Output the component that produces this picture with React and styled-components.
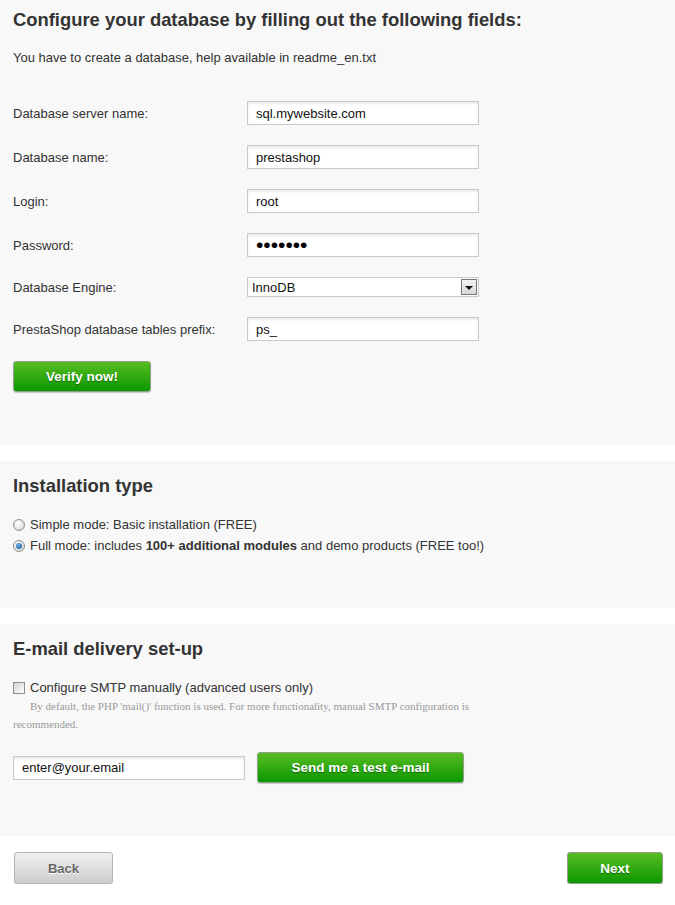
import React from 'react'
import styled, { createGlobalStyle } from 'styled-components'

const GlobalStyle = createGlobalStyle`
   html, body {
      margin: 0;
      padding: 0;
      background: #fff;
   }
   body {
      font-family: "Liberation Sans", Arial, sans-serif;
      font-size: 13px;
      color: #333;
   }
`

const Page = styled.div`
   width: 675px;
   display: flex;
   flex-direction: column;
   gap: 16px;
`

const Section = styled.section`
   background: #f8f8f8;
   padding: ${(p) => p.$top || 15}px 13px ${(p) => p.$bottom || 52}px 13px;
`

const Title = styled.h2`
   margin: 0;
   font-size: 18.4px;
   line-height: 20px;
   font-weight: bold;
   color: #333;
`

const Intro = styled.p`
   margin: 20px 0 36px;
   line-height: 15px;
`

const Fields = styled.div`
   display: flex;
   flex-direction: column;
   gap: 20px;
`

const Row = styled.div`
   display: flex;
   align-items: center;
`

const Label = styled.label`
   width: 234px;
   flex-shrink: 0;
   color: #333;
`

const TextInput = styled.input`
   box-sizing: border-box;
   width: ${(p) => p.$width || 232}px;
   height: 24px;
   margin: 0;
   padding: 0 8px;
   border: 1px solid #c9c9c9;
   background: #fff;
   box-shadow: inset 0 2px 2px rgba(0, 0, 0, 0.08);
   font-family: "Liberation Sans", Arial, sans-serif;
   font-size: 13px;
   color: #111;
   outline: none;
   &[type='password'] {
      font-size: 21px;
      color: #000;
   }
`

const SelectBox = styled.div`
   box-sizing: border-box;
   width: 232px;
   height: 20px;
   border: 1px solid #c9c9c9;
   background: #fff;
   display: flex;
   align-items: center;
   justify-content: space-between;
   padding: 0 1px 0 4px;
   font-size: 13px;
   color: #111;
`

const SelectArrow = styled.span`
   box-sizing: border-box;
   width: 16px;
   height: 16px;
   border: 1px solid #777;
   background: linear-gradient(#f4f4f4, #d8d8d8);
   display: flex;
   align-items: center;
   justify-content: center;
   &::after {
      content: '';
      border-left: 4px solid transparent;
      border-right: 4px solid transparent;
      border-top: 4px solid #111;
      margin-top: 1px;
   }
`

const GreenButton = styled.button`
   box-sizing: border-box;
   width: ${(p) => p.$width}px;
   height: ${(p) => p.$height || 31}px;
   margin: 0;
   padding: 0;
   border: 1px solid #8fa08a;
   border-radius: 3px;
   background: linear-gradient(#58bd22, #0c9700);
   box-shadow: 0 1px 1px rgba(0, 0, 0, 0.2);
   color: #fff;
   font-family: "Liberation Sans", Arial, sans-serif;
   font-size: 13.5px;
   font-weight: bold;
   text-shadow: 0 1px 1px rgba(0, 60, 0, 0.6);
   cursor: pointer;
`

const VerifyWrap = styled.div`
   margin-top: 20px;
`

const Options = styled.div`
   margin-top: 18px;
   display: flex;
   flex-direction: column;
`

const OptionRow = styled.label`
   display: flex;
   align-items: center;
   gap: 5px;
   line-height: 21px;
`

const Radio = styled.span`
   box-sizing: border-box;
   flex-shrink: 0;
   width: 12px;
   height: 12px;
   border-radius: 50%;
   border: 1px solid #8e8e8e;
   background: radial-gradient(circle at 40% 35%, #ffffff, #cfcfcf);
   display: flex;
   align-items: center;
   justify-content: center;
   &::after {
      content: '';
      display: ${(p) => (p.$checked ? 'block' : 'none')};
      width: 6px;
      height: 6px;
      border-radius: 50%;
      background: radial-gradient(circle at 40% 35%, #6fb2e8, #0c4f8c);
   }
`

const Check = styled.span`
   box-sizing: border-box;
   flex-shrink: 0;
   width: 12px;
   height: 12px;
   border: 1px solid #8e8e8e;
   background: linear-gradient(135deg, #d4d4d4, #ffffff);
`

const SmtpRow = styled(OptionRow)`
   margin-top: 20px;
   line-height: 18px;
`

const Note = styled.p`
   margin: 0;
   width: 470px;
   font-family: "Liberation Serif", "Times New Roman", serif;
   font-size: 11px;
   line-height: 18px;
   color: #999;
   text-indent: 17px;
`

const MailRow = styled.div`
   margin-top: 19px;
   display: flex;
   align-items: center;
   gap: 12px;
`

const Footer = styled.div`
   display: flex;
   justify-content: space-between;
   padding: 0 12px 0 14px;
`

const GreyButton = styled.button`
   box-sizing: border-box;
   width: 99px;
   height: 32px;
   margin: 0;
   border: 1px solid #b5b5b5;
   border-radius: 3px;
   background: linear-gradient(#f0f0f0, #cdcdcd);
   box-shadow: 0 1px 1px rgba(0, 0, 0, 0.15);
   color: #666;
   font-family: "Liberation Sans", Arial, sans-serif;
   font-size: 13px;
   font-weight: bold;
   text-shadow: 0 1px 0 #fff;
`

const fields = [
   { label: 'Database server name:', value: 'sql.mywebsite.com' },
   { label: 'Database name:', value: 'prestashop' },
   { label: 'Login:', value: 'root' },
   { label: 'Password:', value: 'abcdefg', type: 'password' },
]

const App = () => {
   return (
      <Page>
         <GlobalStyle />
         <Section $top={10} $bottom={53}>
            <Title>Configure your database by filling out the following fields:</Title>
            <Intro>You have to create a database, help available in readme_en.txt</Intro>
            <Fields>
               {fields.map((f) => (
                  <Row key={f.label}>
                     <Label>{f.label}</Label>
                     <TextInput type={f.type || 'text'} defaultValue={f.value} readOnly />
                  </Row>
               ))}
               <Row>
                  <Label>Database Engine:</Label>
                  <SelectBox>
                     InnoDB
                     <SelectArrow />
                  </SelectBox>
               </Row>
               <Row>
                  <Label>PrestaShop database tables prefix:</Label>
                  <TextInput defaultValue='ps_' readOnly />
               </Row>
            </Fields>
            <VerifyWrap>
               <GreenButton $width={138}>Verify now!</GreenButton>
            </VerifyWrap>
         </Section>

         <Section $bottom={52}>
            <Title>Installation type</Title>
            <Options>
               <OptionRow>
                  <Radio />
                  Simple mode: Basic installation (FREE)
               </OptionRow>
               <OptionRow>
                  <Radio $checked />
                  <span>
                     Full mode: includes <b>100+ additional modules</b> and demo products (FREE too!)
                  </span>
               </OptionRow>
            </Options>
         </Section>

         <Section $bottom={53}>
            <Title>E-mail delivery set-up</Title>
            <SmtpRow>
               <Check />
               Configure SMTP manually (advanced users only)
            </SmtpRow>
            <Note>
               By default, the PHP 'mail()' function is used. For more functionality, manual SMTP configuration is
               recommended.
            </Note>
            <MailRow>
               <TextInput $width={232} defaultValue='enter@your.email' readOnly />
               <GreenButton $width={207}>Send me a test e-mail</GreenButton>
            </MailRow>
         </Section>

         <Footer>
            <GreyButton>Back</GreyButton>
            <GreenButton $width={96} $height={32}>Next</GreenButton>
         </Footer>
      </Page>
   )
}

export default App
